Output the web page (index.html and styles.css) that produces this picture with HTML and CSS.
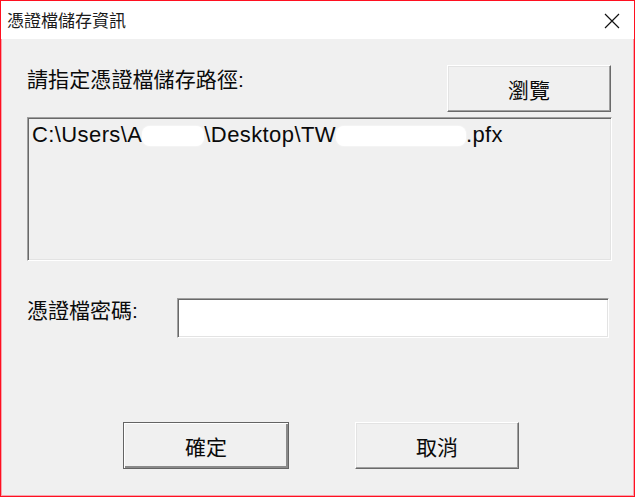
FILE: index.html
```html
<!DOCTYPE html>
<html lang="zh-Hant">
<head>
    <meta charset="UTF-8">
    <title>憑證檔儲存資訊</title>
    <link rel="stylesheet" href="styles.css">
</head>
<body>
<div class="window">
    <div class="titlebar">
        <span class="title">憑證檔儲存資訊</span>
        <svg class="close" width="16" height="16" viewBox="0 0 16 16">
            <path d="M1 1 L15 15 M15 1 L1 15" stroke="#111" stroke-width="1.2" fill="none"/>
        </svg>
    </div>
    <div class="content">
        <div class="row-top">
            <span class="label">請指定憑證檔儲存路徑:</span>
            <div class="btn btn-browse">瀏覽</div>
        </div>
        <div class="pathbox">C:\Users\A<span class="blot blot1"></span>\Desktop\TW<span class="blot blot2"></span>.pfx</div>
        <div class="row-pass">
            <span class="label pass-label">憑證檔密碼:</span>
            <div class="passbox"></div>
        </div>
        <div class="row-buttons">
            <div class="btn btn-default">確定</div>
            <div class="btn">取消</div>
        </div>
    </div>
</div>
</body>
</html>
```

FILE: styles.css
```css
* {
    box-sizing: border-box;
}
body {
    margin: 0;
    font-family: "Liberation Sans", "Noto Sans CJK TC", sans-serif;
    color: #0a0a0a;
}
.window {
    width: 635px;
    height: 497px;
    border: 1px solid #ff1020;
    box-shadow: inset 0 0 0 1px #f7a3ad;
    background: #f0f0f0;
    display: flex;
    flex-direction: column;
}
.titlebar {
    height: 38px;
    background: #fff;
    display: flex;
    align-items: center;
    justify-content: space-between;
    padding: 3px 14px 0 6px;
}
.title {
    font-size: 17px;
    line-height: 20px;
    color: #1b1b1b;
}
.close {
    display: block;
    margin-top: -2px;
}
.content {
    padding: 26px 22px 0 26px;
    display: flex;
    flex-direction: column;
}
.label {
    font-size: 21px;
    line-height: 24px;
}
.row-top {
    height: 47px;
    display: flex;
    align-items: center;
    justify-content: space-between;
}
.row-top .label {
    margin-top: -18px;
    letter-spacing: 0.1px;
}
.btn {
    width: 164px;
    height: 47px;
    display: flex;
    align-items: center;
    justify-content: center;
    font-size: 21px;
    background: #f0f0f0;
    border: 1px solid;
    border-color: #fff #6a6a6a #6a6a6a #fff;
    box-shadow: inset -1px -1px 0 #a0a0a0, inset 1px 1px 0 #e3e3e3;
}
.btn-browse {
    margin-right: 1px;
}
.pathbox {
    margin-top: 5px;
    height: 144px;
    border: 1px solid;
    border-color: #a0a0a0 #fff #fff #a0a0a0;
    box-shadow: inset 1px 1px 0 #696969, inset -1px -1px 0 #e3e3e3;
    padding: 4px 4px;
    font-size: 22px;
    line-height: 25px;
    letter-spacing: 0.4px;
    white-space: nowrap;
}
.blot {
    display: inline-block;
    height: 20px;
    vertical-align: -4px;
    background: #fff;
    border-radius: 8px;
    box-shadow: 0 0 2px #fff;
}
.blot1 {
    width: 62px;
}
.blot2 {
    width: 130px;
}
.row-pass {
    margin-top: 37px;
    height: 40px;
    display: flex;
    align-items: center;
}
.pass-label {
    width: 150px;
    margin-top: -14px;
}
.passbox {
    width: 432px;
    height: 40px;
    background: #fff;
    border: 1px solid;
    border-color: #a0a0a0 #fff #fff #a0a0a0;
    box-shadow: inset 1px 1px 0 #696969, inset -1px -1px 0 #e3e3e3;
}
.row-buttons {
    margin-top: 84px;
    padding-left: 96px;
    display: flex;
    gap: 66px;
}
.btn-default {
    width: 166px;
    border-color: #646464;
    box-shadow: inset 1px 1px 0 #fff, inset -2px -2px 0 #8a8a8a;
}
```
